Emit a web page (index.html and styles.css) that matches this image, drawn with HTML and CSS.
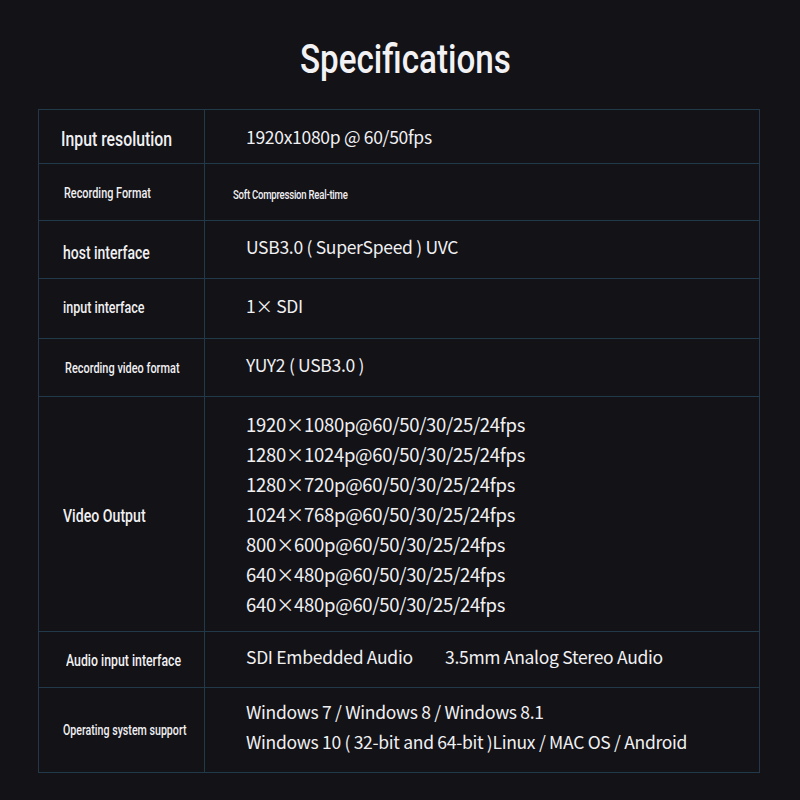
FILE: index.html
```html
<!DOCTYPE html>
<html>
<head>
<meta charset="utf-8">
<link rel="stylesheet" href="styles.css">
</head>
<body>
<div class="page">
  <h1 class="title"><span class="cond">Specifications</span></h1>
  <table class="spec">
    <colgroup><col class="ck"><col class="cv"></colgroup>
    <tr class="r1">
      <td class="k pad-a"><span class="cond k18">Input resolution</span></td>
      <td class="v v1">1920x1080p @ 60/50fps</td>
    </tr>
    <tr class="r2">
      <td class="k pad-b"><span class="cond k13a">Recording Format</span></td>
      <td class="v v-small"><span class="cond k11">Soft Compression Real-time</span></td>
    </tr>
    <tr class="r3">
      <td class="k pad-c"><span class="cond k15">host interface</span></td>
      <td class="v">USB3.0 ( SuperSpeed ) UVC</td>
    </tr>
    <tr class="r4">
      <td class="k pad-f"><span class="cond k14">input interface</span></td>
      <td class="v">1× SDI</td>
    </tr>
    <tr class="r5">
      <td class="k pad-d"><span class="cond k13b">Recording video format</span></td>
      <td class="v">YUY2 ( USB3.0 )</td>
    </tr>
    <tr class="r6">
      <td class="k pad-c"><span class="cond k16">Video Output</span></td>
      <td class="v lines">
        <div>1920×1080p@60/50/30/25/24fps</div>
        <div>1280×1024p@60/50/30/25/24fps</div>
        <div>1280×720p@60/50/30/25/24fps</div>
        <div>1024×768p@60/50/30/25/24fps</div>
        <div>800×600p@60/50/30/25/24fps</div>
        <div>640×480p@60/50/30/25/24fps</div>
        <div>640×480p@60/50/30/25/24fps</div>
      </td>
    </tr>
    <tr class="r7">
      <td class="k pad-e"><span class="cond k14b">Audio input interface</span></td>
      <td class="v"><span class="gap">SDI Embedded Audio</span>3.5mm Analog Stereo Audio</td>
    </tr>
    <tr class="r8">
      <td class="k pad-g"><span class="cond k12">Operating system support</span></td>
      <td class="v lines2">
        <div>Windows 7 / Windows 8 / Windows 8.1</div>
        <div>Windows 10 ( 32-bit and 64-bit )Linux / MAC OS / Android</div>
      </td>
    </tr>
  </table>
</div>
</body>
</html>
```

FILE: styles.css
```css
html, body {
  margin: 0;
  padding: 0;
  background: #131217;
}
.page {
  width: 800px;
  height: 800px;
  background: #131217;
  padding-top: 1px;
  box-sizing: border-box;
}
.cond {
  display: inline-block;
  font-family: Roboto, "Liberation Sans", sans-serif;
  font-weight: 500;
  transform: scaleX(0.76);
  transform-origin: left center;
  white-space: nowrap;
}
.title {
  margin: 34px 0 0 0;
  height: 74px;
  font-size: 40px;
  line-height: 50px;
  color: #f2f2f4;
  font-weight: 500;
  padding-left: 300px;
  box-sizing: border-box;
}
.title .cond {
  transform: scaleX(0.83);
}
.spec {
  margin-left: 38px;
  width: 722px;
  border-collapse: collapse;
  table-layout: fixed;
}
.ck { width: 166px; }
.spec td {
  border: 1px solid #22394a;
  padding: 0;
  vertical-align: middle;
  color: #f0f0f2;
  white-space: nowrap;
  overflow: hidden;
}
.k18 { font-size: 20.8px; }
.k16 { font-size: 18.6px; }
.k15 { font-size: 18.4px; }
.k14 { font-size: 16.5px; }
.k14b { font-size: 16.2px; }
.k13a { font-size: 14.3px; }
.k13b { font-size: 14.4px; }
.k12 { font-size: 14px; }
.k11 { font-size: 12.6px; }
.pad-a { padding-left: 22px !important; padding-top: 4px !important; }
.pad-b { padding-left: 25px !important; padding-top: 2px !important; }
.pad-c { padding-left: 24px !important; padding-top: 6px !important; }
.pad-d { padding-left: 26px !important; padding-top: 1px !important; }
.pad-e { padding-left: 27px !important; padding-top: 2px !important; }
.pad-f { padding-left: 24px !important; padding-bottom: 2px !important; }
.pad-g { padding-left: 24px !important; padding-bottom: 1px !important; }
.k.pad-c:has(.k16) { padding-top: 4px !important; }
.v {
  font-family: "Noto Sans CJK SC", "Noto Sans", sans-serif;
  font-size: 17.5px;
  padding-left: 41px !important;
  padding-bottom: 6px !important;
  letter-spacing: -0.3px;
}
.v1 {
  padding-bottom: 0 !important;
}
.v-small {
  padding-left: 28px !important;
  padding-bottom: 2px !important;
}
.lines {
  font-size: 18.5px;
  padding-bottom: 0 !important;
}
.lines div, .lines2 div {
  line-height: 30px;
}
.gap {
  display: inline-block;
  width: 199px;
}
.r1 { height: 54px; }
.r2 { height: 57px; }
.r3 { height: 58px; }
.r4 { height: 60px; }
.r5 { height: 58px; }
.r6 { height: 235px; }
.r7 { height: 56px; }
.r8 { height: 85px; }
```
